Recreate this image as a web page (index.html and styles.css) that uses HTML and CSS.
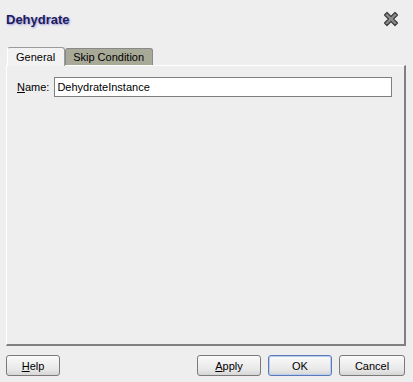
FILE: index.html
```html
<!DOCTYPE html>
<html lang="en">
<head>
    <meta charset="UTF-8">
    <title>Dehydrate</title>
    <link rel="stylesheet" href="styles.css">
</head>
<body>
    <div class="dialog">
        <div class="titlebar">
            <h1 class="title">Dehydrate</h1>
            <span class="close">
                <svg width="16" height="16" viewBox="0 0 16 16">
                    <path d="M1.5 4 L4 1.5 L8 5.5 L12 1.5 L14.5 4 L10.5 8 L14.5 12 L12 14.5 L8 10.5 L4 14.5 L1.5 12 L5.5 8 Z" fill="#8c8c8c" stroke="#3c3c3c" stroke-width="1.2" stroke-linejoin="round"/>
                </svg>
            </span>
        </div>

        <div class="tabs">
            <div class="tab active">General</div>
            <div class="tab">Skip Condition</div>
        </div>

        <div class="panel">
            <div class="field">
                <label class="label"><u>N</u>ame:</label>
                <div class="input">DehydrateInstance</div>
            </div>
        </div>

        <div class="buttons">
            <button class="btn help"><u>H</u>elp</button>
            <div class="spacer"></div>
            <button class="btn"><u>A</u>pply</button>
            <button class="btn default">OK</button>
            <button class="btn cancel">Cancel</button>
        </div>
    </div>
</body>
</html>
```

FILE: styles.css
```css
body {
    margin: 0;
    padding: 0;
    background-color: #eeeeee;
    font-family: "Liberation Sans", Arial, sans-serif;
    font-size: 11px;
    color: #000;
}

.dialog {
    width: 413px;
    height: 382px;
    display: flex;
    flex-direction: column;
    box-sizing: border-box;
    padding: 0 7px 0 6px;
}

.titlebar {
    display: flex;
    align-items: center;
    justify-content: space-between;
    height: 38px;
}

.title {
    margin: 0;
    font-family: "Liberation Sans", Arial, sans-serif;
    font-size: 13px;
    font-weight: bold;
    color: #1c1c5a;
    text-shadow: 1px 1px 2px #9a9ae0;
}

.close {
    display: flex;
    margin-right: 7px;
}

.tabs {
    display: flex;
    align-items: flex-end;
    height: 27px;
    padding-left: 1px;
}

.tab {
    height: 16px;
    line-height: 16px;
    padding: 0 8px 0 7px;
    border: 1px solid #888;
    border-bottom: none;
    border-radius: 3px 3px 0 0;
    background-color: #a9a997;
}

.tab.active {
    height: 18px;
    line-height: 19px;
    padding: 0 9px 0 8px;
    background-color: #f2f2f2;
    border-color: #9a9a9a;
    border-left-color: #fff;
    position: relative;
    top: 1px;
}

.panel {
    height: 281px;
    border-top: 1px solid #fff;
    border-left: 1px solid #fff;
    border-right: 2px solid #808080;
    border-bottom: 2px solid #808080;
    padding: 11px 12px 0 10px;
    box-sizing: border-box;
}

.field {
    display: flex;
    align-items: center;
    gap: 5px;
}

.input {
    flex: 1;
    height: 18px;
    line-height: 18px;
    border: 1px solid #7f7f7f;
    background-color: #fff;
    padding: 0 2px;
}

.buttons {
    display: flex;
    align-items: center;
    gap: 7px;
    margin-top: 9px;
    padding-right: 1px;
}

.spacer {
    flex: 1;
}

.btn {
    width: 64px;
    height: 21px;
    font-family: "Liberation Sans", Arial, sans-serif;
    font-size: 11px;
    color: #000;
    border: 1px solid #7a7a7a;
    border-radius: 3px;
    background: linear-gradient(#fafafa, #e8e8e8 70%, #d6d6d6);
    padding: 0;
}

.btn.help {
    width: 54px;
}

.btn.cancel {
    width: 66px;
}

.btn.default {
    border-color: #5a7ab8;
    box-shadow: inset 0 0 0 1px #b8cdf0;
}
```
